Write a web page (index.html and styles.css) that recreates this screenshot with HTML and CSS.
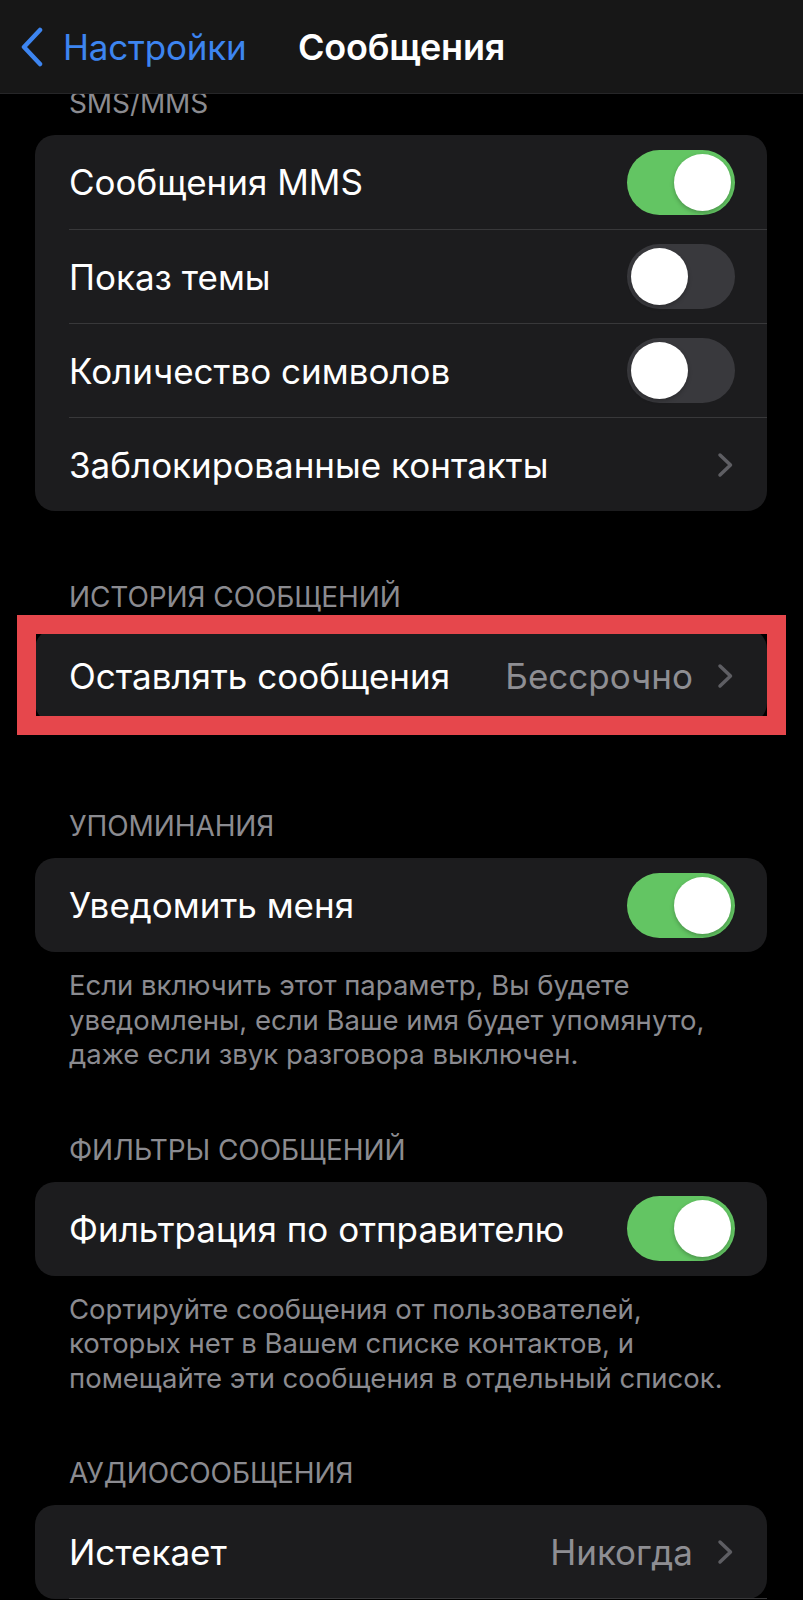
FILE: index.html
```html
<!DOCTYPE html>
<html lang="ru">
<head>
<meta charset="utf-8">
<title>Сообщения</title>
<link rel="stylesheet" href="styles.css">
</head>
<body>
<header class="navbar">
  <a class="back">
    <svg class="back-icon" width="24" height="40" viewBox="0 0 24 40"><path d="M20 3 L4 20 L20 37" fill="none" stroke="#3d85f0" stroke-width="4.5" stroke-linecap="round" stroke-linejoin="round"/></svg>
    <span class="back-label">Настройки</span>
  </a>
  <h1 class="nav-title">Сообщения</h1>
</header>

<main class="content">
  <section class="section section--first">
    <h2 class="section-label">SMS/MMS</h2>
    <div class="card">
      <div class="row"><span class="row-title">Сообщения MMS</span><span class="switch switch--on"><span class="knob"></span></span></div>
      <div class="row"><span class="row-title">Показ темы</span><span class="switch"><span class="knob"></span></span></div>
      <div class="row"><span class="row-title">Количество символов</span><span class="switch"><span class="knob"></span></span></div>
      <div class="row"><span class="row-title">Заблокированные контакты</span><span class="accessory"><svg class="chev" width="17" height="26" viewBox="0 0 17 26"><path d="M3 3 L13.5 13 L3 23" fill="none" stroke="#5e5e63" stroke-width="3.5" stroke-linecap="round" stroke-linejoin="round"/></svg></span></div>
    </div>
  </section>

  <section class="section section--after-card">
    <h2 class="section-label">История сообщений</h2>
    <div class="card card--marked">
      <div class="row"><span class="row-title">Оставлять сообщения</span><span class="accessory"><span class="row-value">Бессрочно</span><svg class="chev" width="17" height="26" viewBox="0 0 17 26"><path d="M3 3 L13.5 13 L3 23" fill="none" stroke="#5e5e63" stroke-width="3.5" stroke-linecap="round" stroke-linejoin="round"/></svg></span></div>
      <div class="mark"></div>
    </div>
  </section>

  <section class="section section--after-mark">
    <h2 class="section-label">Упоминания</h2>
    <div class="card">
      <div class="row"><span class="row-title">Уведомить меня</span><span class="switch switch--on"><span class="knob"></span></span></div>
    </div>
    <p class="section-footer">Если включить этот параметр, Вы будете<br>уведомлены, если Ваше имя будет упомянуто,<br>даже если звук разговора выключен.</p>
  </section>

  <section class="section">
    <h2 class="section-label">Фильтры сообщений</h2>
    <div class="card">
      <div class="row"><span class="row-title">Фильтрация по отправителю</span><span class="switch switch--on"><span class="knob"></span></span></div>
    </div>
    <p class="section-footer">Сортируйте сообщения от пользователей,<br>которых нет в Вашем списке контактов, и<br>помещайте эти сообщения в отдельный список.</p>
  </section>

  <section class="section">
    <h2 class="section-label">Аудиосообщения</h2>
    <div class="card">
      <div class="row row--divided"><span class="row-title">Истекает</span><span class="accessory"><span class="row-value">Никогда</span><svg class="chev" width="17" height="26" viewBox="0 0 17 26"><path d="M3 3 L13.5 13 L3 23" fill="none" stroke="#5e5e63" stroke-width="3.5" stroke-linecap="round" stroke-linejoin="round"/></svg></span></div>
    </div>
  </section>
</main>
</body>
</html>
```

FILE: styles.css
```css
* { box-sizing: border-box; }

html, body {
  margin: 0;
  padding: 0;
  background: #000;
}

body {
  width: 803px;
  height: 1600px;
  overflow: hidden;
  font-family: Inter, Roboto, "Liberation Sans", Arial, sans-serif;
  color: #fff;
}

.navbar {
  position: relative;
  z-index: 2;
  height: 94px;
  background: #171717;
  border-bottom: 1px solid #262628;
  display: grid;
  grid-template-columns: 1fr auto 1fr;
  align-items: center;
}

.back {
  grid-column: 1;
  display: flex;
  align-items: center;
  gap: 19px;
  padding-left: 20px;
}

.back-icon { display: block; flex: none; }

.back-label {
  font-size: 35px;
  color: #3d85f0;
  letter-spacing: -0.2px;
}

.nav-title {
  grid-column: 2;
  margin: 0;
  font-size: 36px;
  font-weight: 600;
  letter-spacing: -0.2px;
}

.content {
  padding: 0 36px 0 35px;
}

.section { margin-top: 62px; }
.section--first { margin-top: -7px; }
.section--after-card { margin-top: 70px; }
.section--after-mark { margin-top: 87px; }

.section-label {
  margin: 0 0 16px;
  padding-left: 34px;
  font-size: 28px;
  line-height: 32px;
  font-weight: 400;
  text-transform: uppercase;
  color: #8b8b90;
  letter-spacing: -0.1px;
}

.card {
  background: #1c1c1e;
  border-radius: 20px;
}

.card--marked { position: relative; }

.mark {
  position: absolute;
  top: -14px;
  bottom: -12px;
  left: -18px;
  right: -19px;
  border: 19px solid #e6474c;
  pointer-events: none;
}

.row {
  height: 94px;
  margin-left: 34px;
  padding-right: 32px;
  display: flex;
  align-items: center;
  justify-content: space-between;
  border-top: 1px solid #38383a;
}

.row:first-child { border-top: none; }
.row--divided { border-bottom: 1px solid #38383a; }

.row-title {
  font-size: 35px;
  white-space: nowrap;
}

.accessory {
  display: flex;
  align-items: center;
  gap: 24px;
}

.row-value {
  font-size: 35px;
  color: #8e8e93;
}

.chev { display: block; margin-right: 1px; }

.switch {
  width: 108px;
  height: 65px;
  border-radius: 33px;
  background: #39393d;
  padding: 4px;
  display: flex;
  justify-content: flex-start;
  flex: none;
}

.switch--on {
  background: #63c563;
  justify-content: flex-end;
}

.knob {
  width: 57px;
  height: 57px;
  border-radius: 50%;
  background: #fff;
  box-shadow: 0 2px 4px rgba(0,0,0,0.25);
}

.section-footer {
  margin: 16px 0 0;
  padding: 0 0 0 34px;
  font-size: 27.5px;
  line-height: 34.5px;
  color: #8b8b90;
  white-space: nowrap;
}
```
